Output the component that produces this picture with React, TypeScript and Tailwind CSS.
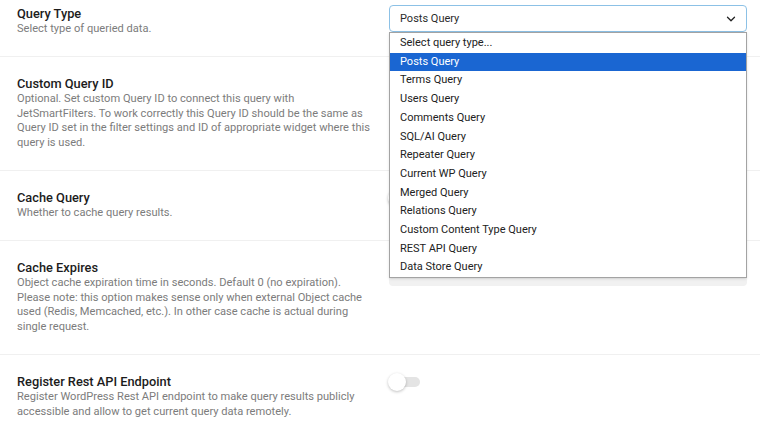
import { ChevronDown } from "lucide-react";

interface Setting {
    title: string;
    desc: string[];
    control: "select" | "input" | "toggle";
}

const settings: Setting[] = [
    { title: "Query Type", desc: ["Select type of queried data."], control: "select" },
    {
        title: "Custom Query ID",
        desc: [
            "Optional. Set custom Query ID to connect this query with",
            "JetSmartFilters. To work correctly this Query ID should be the same as",
            "Query ID set in the filter settings and ID of appropriate widget where this",
            "query is used.",
        ],
        control: "input",
    },
    { title: "Cache Query", desc: ["Whether to cache query results."], control: "toggle" },
    {
        title: "Cache Expires",
        desc: [
            "Object cache expiration time in seconds. Default 0 (no expiration).",
            "Please note: this option makes sense only when external Object cache",
            "used (Redis, Memcached, etc.). In other case cache is actual during",
            "single request.",
        ],
        control: "input",
    },
    {
        title: "Register Rest API Endpoint",
        desc: [
            "Register WordPress Rest API endpoint to make query results publicly",
            "accessible and allow to get current query data remotely.",
        ],
        control: "toggle",
    },
];

const queryTypes = [
    "Select query type...",
    "Posts Query",
    "Terms Query",
    "Users Query",
    "Comments Query",
    "SQL/AI Query",
    "Repeater Query",
    "Current WP Query",
    "Merged Query",
    "Relations Query",
    "Custom Content Type Query",
    "REST API Query",
    "Data Store Query",
];

const Toggle = () => (
    <div className="relative w-[33px] h-[18px] flex items-center">
        <div className="ml-[8px] w-[24px] h-[10px] rounded-full bg-[#e4e4e4]" />
        <div className="absolute left-0 top-0 w-[18px] h-[18px] rounded-full bg-white shadow-[0_1px_3px_rgba(0,0,0,0.25)]" />
    </div>
);

const QuerySelect = () => (
    <div className="relative">
        <div className="h-[27px] flex items-center justify-between pl-[10px] pr-[8px] pt-[1px] rounded-[4px] border border-[#8cc1e6] bg-white text-[11px] text-[#2b2b2b]">
            <span>Posts Query</span>
            <ChevronDown size={14} strokeWidth={2.2} className="text-[#222]" />
        </div>
        <ul className="absolute z-10 left-0 right-0 top-[27px] pt-[1px] bg-white border border-[#a3a3a3] shadow-sm">
            {queryTypes.map((q) => (
                <li
                    key={q}
                    className={
                        q === "Posts Query"
                            ? "h-[18.7px] flex items-center pl-[10px] text-[11px] bg-[#1a66d2] text-white"
                            : "h-[18.7px] flex items-center pl-[10px] text-[11px] text-[#222]"
                    }
                >
                    {q}
                </li>
            ))}
        </ul>
    </div>
);

const App = () => {
    return (
        <div className="w-[760px] h-[430px] overflow-hidden bg-white font-['Roboto',sans-serif]">
            <div className="mt-[-13px]">
                {settings.map((s, i) => (
                    <div
                        key={s.title}
                        className={
                            i === 0
                                ? "flex pt-[18px] pb-[19.5px] pl-[17px] pr-[13px]"
                                : "flex pt-[18px] pb-[19.5px] pl-[17px] pr-[13px] border-t border-[#f0f0f0]"
                        }
                    >
                        <div className="w-[372px] shrink-0">
                            <div className="text-[12.8px] leading-[17px] font-medium text-[#1c1c1c]">{s.title}</div>
                            <div className="text-[11.1px] leading-[14.6px] text-[#7c7c7c] whitespace-nowrap">
                                {s.desc.map((d) => (
                                    <div key={d}>{d}</div>
                                ))}
                            </div>
                        </div>
                        <div className="flex-1">
                            {s.control === "select" && <QuerySelect />}
                            {s.control === "input" && <div className="h-[27px] rounded-[4px] bg-[#f1f1f1]" />}
                            {s.control === "toggle" && (
                                <div className="ml-[-1px]">
                                    <Toggle />
                                </div>
                            )}
                        </div>
                    </div>
                ))}
            </div>
        </div>
    );
};

export default App;
